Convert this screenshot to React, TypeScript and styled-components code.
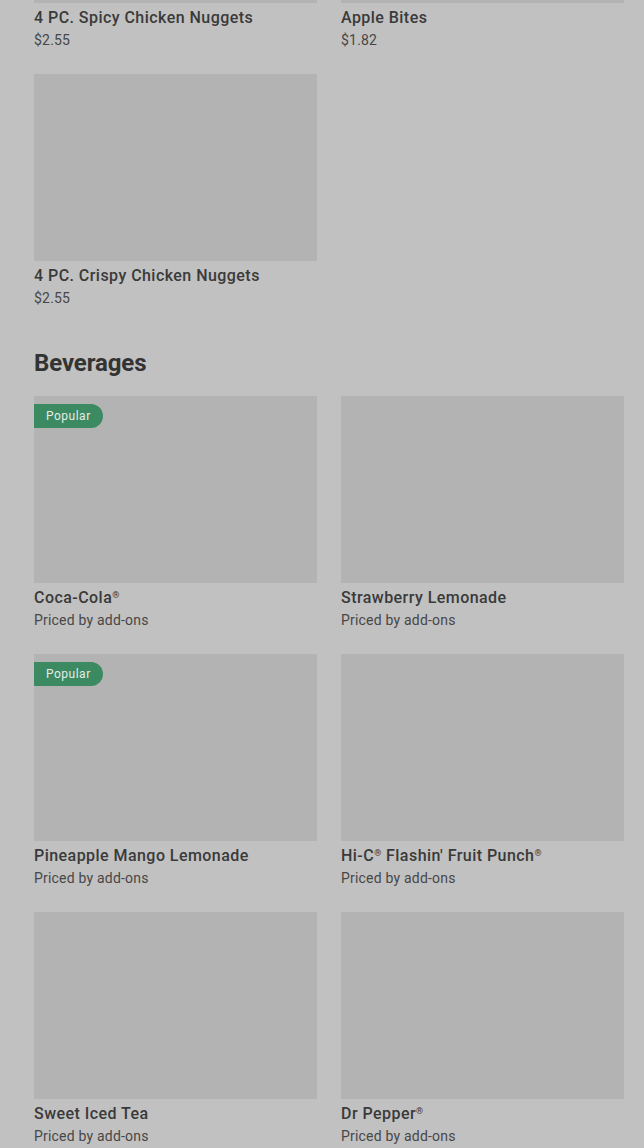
import styled, { createGlobalStyle } from "styled-components"

const GlobalStyle = createGlobalStyle`
    html, body {
        margin: 0;
        padding: 0;
        background-color: #c1c1c1;
    }
    body {
        font-family: Roboto, "Liberation Sans", sans-serif;
        color: #3b3b3b;
    }
`

const Page = styled.div`
    padding: 0 20px 0 34px;
    margin-top: -184px;
`

const Section = styled.section`
    margin-bottom: 39px;
`

const Heading = styled.h2`
    margin: 0 0 17px;
    padding-top: 1px;
    font-size: 24px;
    line-height: 31px;
    font-weight: 700;
    letter-spacing: -0.1px;
    color: #333;
`

const Grid = styled.div`
    display: grid;
    grid-template-columns: repeat(2, 283px);
    column-gap: 24px;
    row-gap: 24px;
`

const Card = styled.div`
    display: flex;
    flex-direction: column;
`

const Thumb = styled.div`
    position: relative;
    height: 187px;
    background-color: #b3b3b3;
`

const Badge = styled.span`
    position: absolute;
    top: 8px;
    left: 0;
    height: 24px;
    line-height: 24px;
    padding: 0 12px;
    border-radius: 0 12px 12px 0;
    background-color: #3b8a62;
    color: #e4ece7;
    font-size: 12px;
    letter-spacing: 0.5px;
`

const Title = styled.div`
    margin-top: 5px;
    font-size: 16px;
    line-height: 20px;
    font-weight: 500;
    letter-spacing: 0.45px;
    color: #3a3a3a;
`

const Mark = styled.span`
    font-size: 9px;
    vertical-align: 5px;
    line-height: 0;
`

const Price = styled.div`
    margin-top: 2px;
    font-size: 14px;
    line-height: 20px;
    letter-spacing: 0.2px;
    color: #474747;
`

type Item = { name: string; price: string; popular?: boolean }

const sides: Item[] = [
    { name: "4 PC. Spicy Chicken Nuggets", price: "$2.55" },
    { name: "Apple Bites", price: "$1.82" },
    { name: "4 PC. Crispy Chicken Nuggets", price: "$2.55" },
]

const beverages: Item[] = [
    { name: "Coca-Cola®", price: "Priced by add-ons", popular: true },
    { name: "Strawberry Lemonade", price: "Priced by add-ons" },
    { name: "Pineapple Mango Lemonade", price: "Priced by add-ons", popular: true },
    { name: "Hi-C® Flashin' Fruit Punch®", price: "Priced by add-ons" },
    { name: "Sweet Iced Tea", price: "Priced by add-ons" },
    { name: "Dr Pepper®", price: "Priced by add-ons" },
]

// small superscript for the registered marks
function ItemName({ name }: { name: string }) {
    const parts = name.split("®")
    return (
        <>
            {parts.map((part, i) => (
                <span key={i}>
                    {part}
                    {i < parts.length - 1 && <Mark>®</Mark>}
                </span>
            ))}
        </>
    )
}

function MenuCard({ item }: { item: Item }) {
    return (
        <Card>
            <Thumb>{item.popular && <Badge>Popular</Badge>}</Thumb>
            <Title>
                <ItemName name={item.name} />
            </Title>
            <Price>{item.price}</Price>
        </Card>
    )
}

function App() {
    return (
        <>
            <GlobalStyle />
            <Page>
                <Section>
                    <Grid>
                        {sides.map((item) => (
                            <MenuCard key={item.name} item={item} />
                        ))}
                    </Grid>
                </Section>
                <Section>
                    <Heading>Beverages</Heading>
                    <Grid>
                        {beverages.map((item) => (
                            <MenuCard key={item.name} item={item} />
                        ))}
                    </Grid>
                </Section>
            </Page>
        </>
    )
}

export default App
